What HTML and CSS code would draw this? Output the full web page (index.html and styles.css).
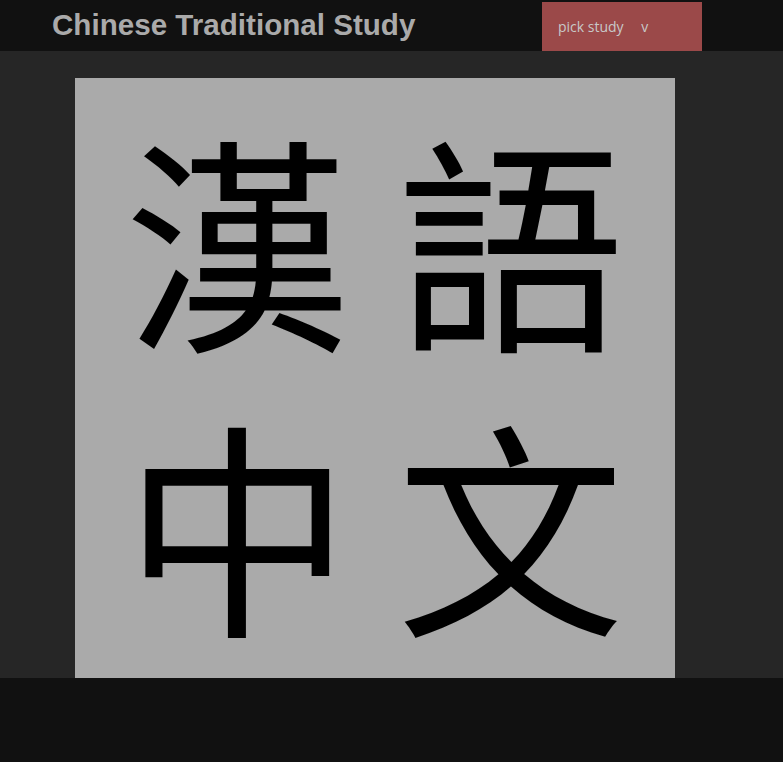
FILE: index.html
```html
<!DOCTYPE html>
<html lang="en">
<head>
<meta charset="utf-8">
<title>Chinese Traditional Study</title>
<link rel="stylesheet" href="styles.css">
</head>
<body>
<header class="topbar">
  <h1 class="title">Chinese Traditional Study</h1>
  <button class="picker">pick study <span class="caret">v</span></button>
</header>
<main class="stage">
  <div class="card" lang="zh-Hant">
    <span class="glyph">漢</span>
    <span class="glyph">語</span>
    <span class="glyph">中</span>
    <span class="glyph">文</span>
  </div>
</main>
<footer class="bottombar"></footer>
</body>
</html>
```
FILE: styles.css
```css
html, body {
  margin: 0;
  padding: 0;
  background: #111111;
}
body {
  width: 783px;
  height: 762px;
  overflow: hidden;
}
.topbar {
  height: 51px;
  background: #111111;
  display: flex;
  align-items: flex-start;
  box-sizing: border-box;
}
.title {
  margin: 0;
  padding: 8px 0 0 52px;
  width: 542px;
  box-sizing: border-box;
  font-family: "Liberation Sans", Arial, sans-serif;
  font-weight: bold;
  font-size: 29.6px;
  line-height: 33px;
  color: #aaaaaa;
}
.picker {
  margin-top: 2px;
  width: 160px;
  height: 49px;
  background: #9b4949;
  border: none;
  padding: 0 0 0 16px;
  text-align: left;
  font-family: "Open Sans", "DejaVu Sans", sans-serif;
  font-size: 14px;
  color: #c8c8c8;
}
.caret {
  margin-left: 14px;
}
.stage {
  height: 627px;
  background: #262626;
  padding: 27px 0 0 75px;
  box-sizing: border-box;
}
.card {
  width: 600px;
  height: 600px;
  background: #aaaaaa;
  display: grid;
  grid-template-columns: 273px 273px;
  grid-template-rows: 285px 285px;
  padding: 15px 0 0 26px;
  box-sizing: border-box;
}
.glyph {
  display: flex;
  align-items: center;
  justify-content: center;
  font-family: "Noto Sans CJK TC", "Noto Sans CJK SC", sans-serif;
  font-size: 228px;
  line-height: 1;
  color: #000000;
}
.bottombar {
  height: 84px;
  background: #111111;
}
```
